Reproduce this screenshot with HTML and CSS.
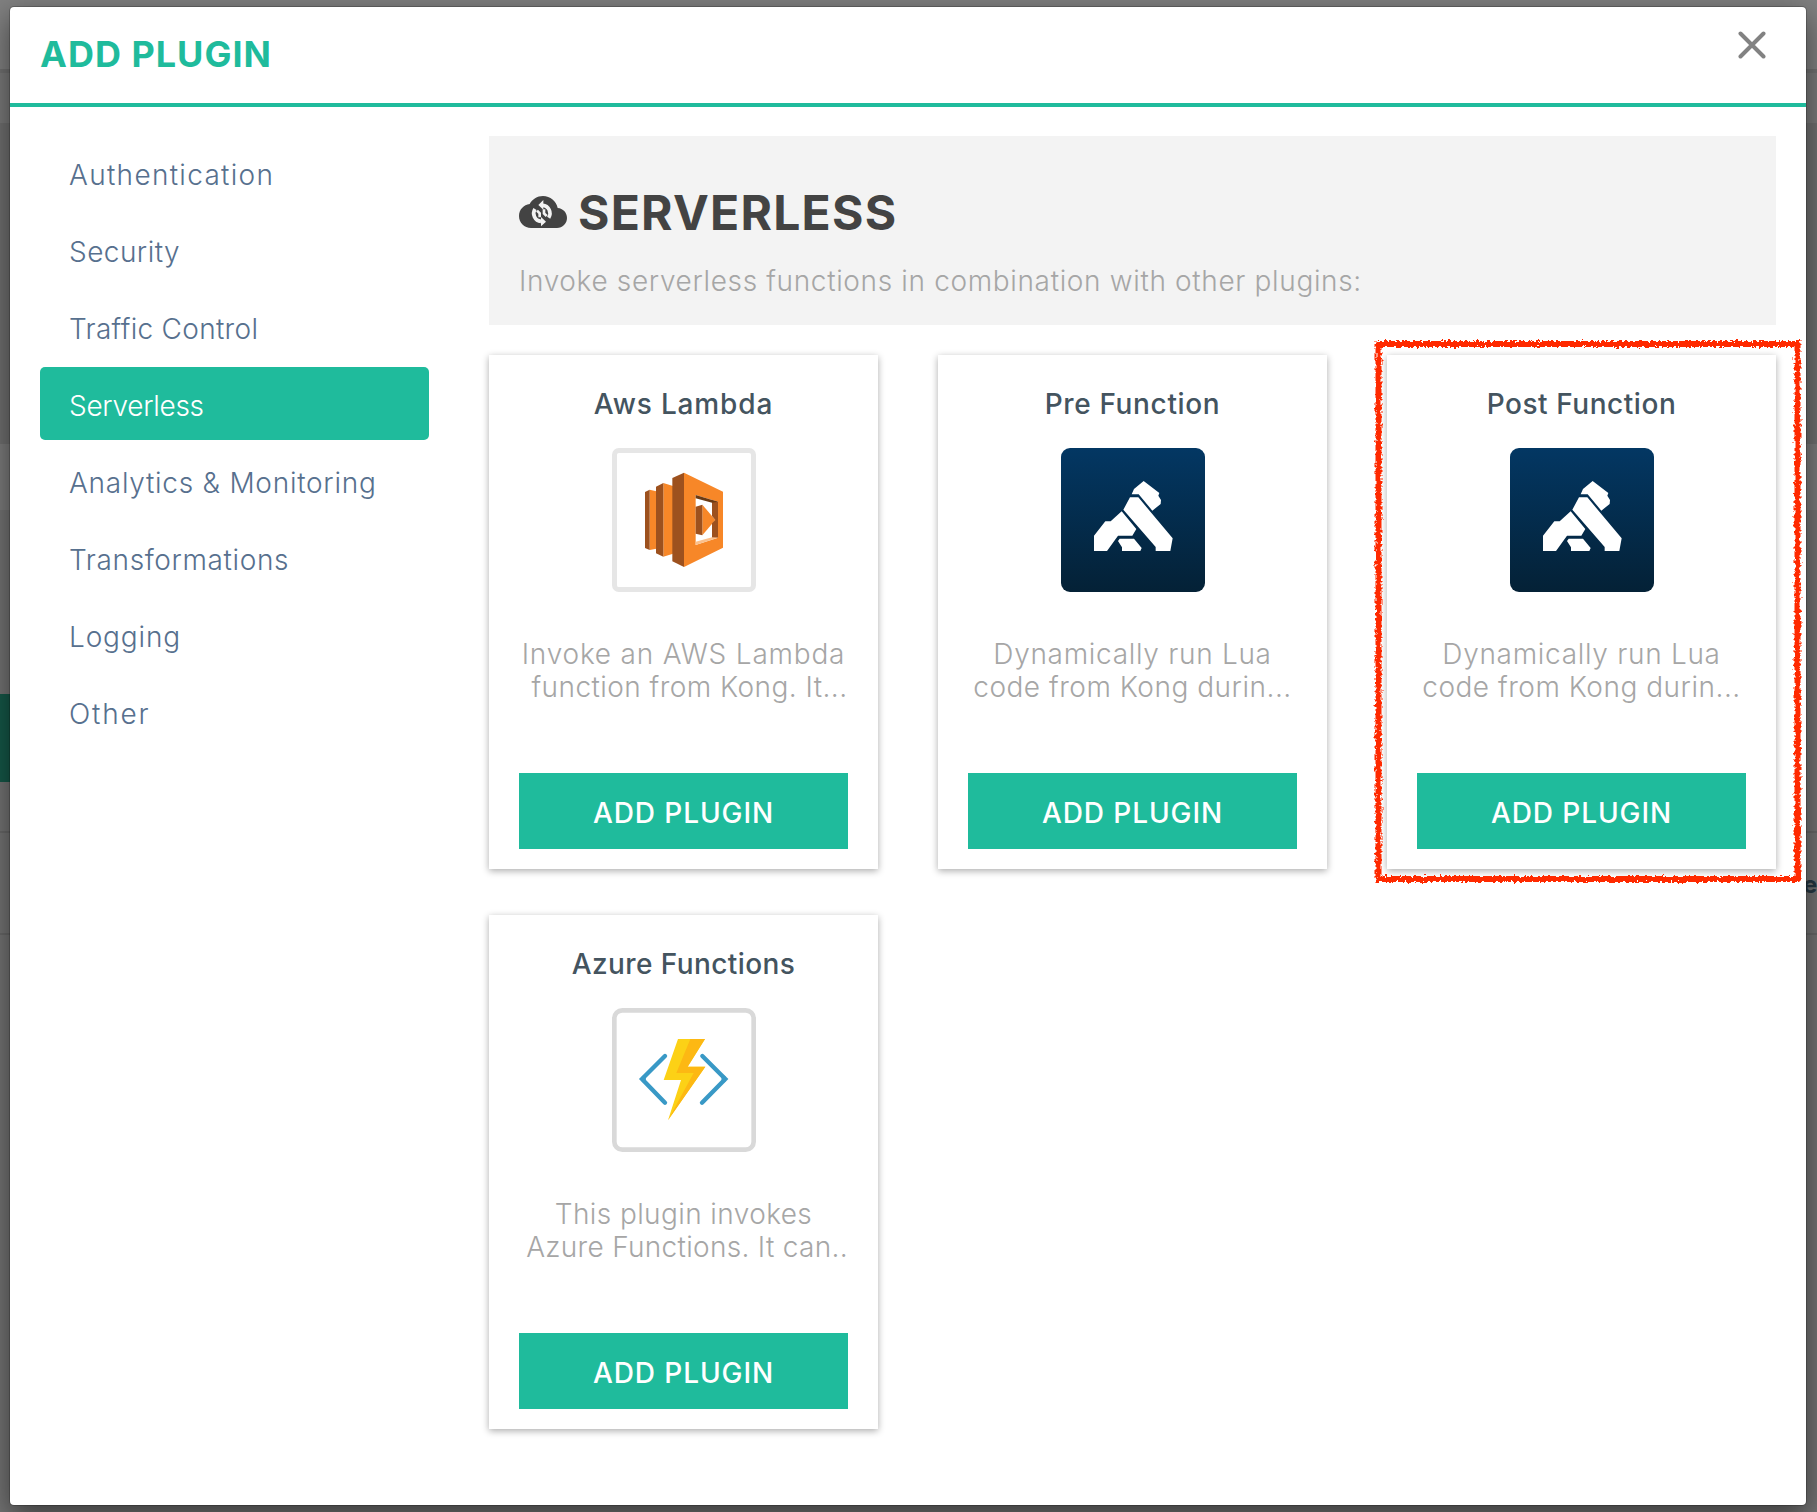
FILE: index.html
```html
<!DOCTYPE html>
<html lang="en">
<head>
<meta charset="utf-8">
<title>Add Plugin</title>
<link rel="stylesheet" href="styles.css">
</head>
<body>
<div class="page">
  <div class="band band--top"></div>
  <div class="band band--sub"></div>
  <div class="band band--a"></div>
  <div class="band band--b"></div>
  <div class="band band--c"></div>
  <div class="band band--d"></div>
  <div class="band band--active"><span class="page__tab"></span></div>
  <div class="band band--e"></div>
  <div class="band band--f"><span class="page__word">ea</span></div>
  <div class="band band--g"></div>
</div>

<svg class="defs" width="0" height="0">
  <defs>
    <linearGradient id="kong-bg" x1="0" y1="0" x2="0" y2="1">
      <stop offset="0" stop-color="#033763"/><stop offset="1" stop-color="#042136"/>
    </linearGradient>
    <symbol id="kong" viewBox="33 54 432 432">
      <rect x="33" y="54" width="432" height="432" rx="27" fill="url(#kong-bg)"/>
      <g fill="#fff">
        <path d="M281 153 328 189 325 197 333 210 332 222 307 242 266 193 245 193 252 177Z"/>
        <path d="M240 202H265L368 325 361 363H317V351L220 239Z"/>
        <path d="M215 244 259 297 247 317H204L171 363H132V317L166 274H182Z"/>
        <path d="M209 326H252L275 354 271 363H216V352L204 333Z"/>
      </g>
    </symbol>
  </defs>
</svg>

<section class="modal">
  <header class="modal__header">
    <h1 class="modal__title">ADD PLUGIN</h1>
    <svg class="modal__close" viewBox="0 0 28 28"><path d="M2.500 2.500 25.500 25.500M25.500 2.500 2.500 25.500"/></svg>
  </header>
  <div class="modal__body">
    <nav class="nav">
      <a class="nav__item nav__item--auth">Authentication</a>
      <a class="nav__item nav__item--security">Security</a>
      <a class="nav__item nav__item--traffic">Traffic Control</a>
      <a class="nav__item nav__item--serverless nav__item--active">Serverless</a>
      <a class="nav__item nav__item--analytics">Analytics &amp; Monitoring</a>
      <a class="nav__item nav__item--transform">Transformations</a>
      <a class="nav__item nav__item--logging">Logging</a>
      <a class="nav__item nav__item--other">Other</a>
    </nav>
    <main class="content">
      <div class="banner">
        <h2 class="banner__title">
          <svg class="banner__icon" viewBox="12 15 144 96">
            <path fill="#434343" transform="translate(12 -9) scale(6)" d="M19.35 10.04C18.67 6.59 15.64 4 12 4 9.11 4 6.6 5.64 5.35 8.04 2.34 8.36 0 10.91 0 14c0 3.31 2.69 6 6 6h13c2.76 0 5-2.24 5-5 0-2.64-2.05-4.78-4.65-4.96z"/>
            <g fill="none" stroke="#f3f3f3" stroke-width="11">
              <path d="M83 43A24 24 0 0 1 101 80"/>
              <path d="M78 91A24 24 0 0 1 60 54"/>
              <path stroke-width="8" d="M66 59 74 67V79M95 75 87 67V55"/>
            </g>
            <path fill="#f3f3f3" d="M85 27V56L70 42ZM78 78V106L93 92Z"/>
          </svg>
          <span>SERVERLESS</span>
        </h2>
        <p class="banner__text">Invoke serverless functions in combination with other plugins:</p>
      </div>
      <div class="grid">
        <article class="card">
          <h3 class="card__title card__title--aws">Aws Lambda</h3>
          <svg class="card__logo" viewBox="36 54 432 432">
            <rect x="43.500" y="61.500" width="417" height="417" rx="13" fill="#fff" stroke="#e6e6e6" stroke-width="15"/>
            <g fill="#f78728">
              <path d="M149 179 169 184V356L149 360Z"/><path d="M190 159 219 168V371L190 380Z"/>
              <path fill-rule="evenodd" d="M252 128 369 185V353L252 411ZM287 195V345L354 323V215Z"/>
              <path d="M307 224 346 270 307 316Z"/>
            </g>
            <g fill="#9d511e">
              <path d="M135 186 149 179V360L135 354Z"/><path d="M168 170 190 159V380L168 370Z"/>
              <path d="M217 144 252 128V411L217 394Z"/><path d="M287 230 307 224V316L287 311Z"/>
              <path d="M336 211 354 215V323L336 324V280L346 270 336 258Z"/>
            </g>
            <path fill="#6b3a13" d="M287 195 354 215 336 218 287 205Z"/>
            <path fill="#fbc08c" d="M287 335 336 322 354 323 287 345Z"/>
          </svg>
          <p class="card__text"><span class="line line--aws1">Invoke an AWS Lambda</span><span class="line line--aws2">function from Kong. It...</span></p>
          <button class="card__button">ADD PLUGIN</button>
        </article>
        <article class="card">
          <h3 class="card__title card__title--pre">Pre Function</h3>
          <svg class="card__logo"><use href="#kong"/></svg>
          <p class="card__text"><span class="line line--lua1">Dynamically run Lua</span><span class="line line--lua2">code from Kong durin...</span></p>
          <button class="card__button">ADD PLUGIN</button>
        </article>
        <article class="card">
          <h3 class="card__title card__title--post">Post Function</h3>
          <svg class="card__logo"><use href="#kong"/></svg>
          <p class="card__text"><span class="line line--lua1">Dynamically run Lua</span><span class="line line--lua2">code from Kong durin...</span></p>
          <button class="card__button">ADD PLUGIN</button>
          <svg class="marker" viewBox="0 0 440 556">
            <filter id="crayon" x="-5%" y="-5%" width="110%" height="110%">
              <feTurbulence type="fractalNoise" baseFrequency="0.35" numOctaves="2" seed="4" result="n"/>
              <feDisplacementMap in="SourceGraphic" in2="n" scale="6" xChannelSelector="R" yChannelSelector="G"/>
            </filter>
            <rect x="10.500" y="11" width="419" height="535" filter="url(#crayon)"/>
          </svg>
        </article>
        <article class="card">
          <h3 class="card__title card__title--azure">Azure Functions</h3>
          <svg class="card__logo" viewBox="36 54 432 432">
            <rect x="43" y="61" width="418" height="418" rx="24" fill="#fff" stroke="#d9d9d9" stroke-width="14"/>
            <g fill="none" stroke="#3999c6" stroke-width="13" stroke-linecap="round">
              <path d="M195 198 126 267 195 338M307 198 376 267 306 338"/>
              <path d="M131 263V271M371 263V271"/>
            </g>
            <path fill="#fcd116" d="M234 147H315L263 230H316L204 391 243 270H191Z"/>
            <path fill="#fdb813" d="M271 147H315L263 230H316L204 391 281 249H229Z"/>
          </svg>
          <p class="card__text"><span class="line line--az1">This plugin invokes</span><span class="line line--az2">Azure Functions. It can..</span></p>
          <button class="card__button">ADD PLUGIN</button>
        </article>
      </div>
    </main>
  </div>
</section>
</body>
</html>
```
FILE: styles.css
```css
* { box-sizing: border-box; margin: 0; padding: 0; }

body {
  width: 1817px;
  height: 1512px;
  overflow: hidden;
  position: relative;
  background: #6c6c6c;
  font-family: Inter, "Open Sans", sans-serif;
  font-weight: 330;
  font-size: 28px;
}

.defs { position: absolute; }

/* dimmed page behind the dialog */
.page { display: flex; flex-direction: column; height: 1512px; }
.band { flex: none; background: #747474; }
.band--top { height: 69px; background: #818181; }
.band--sub { height: 4px; background: #717171; }
.band--a { height: 50px; background: #7a7a7a; }
.band--b { height: 321px; background: #707070; }
.band--c { height: 66px; background: #7c7c7c; }
.band--d { height: 184px; }
.band--active { height: 88px; background: #747474; }
.page__tab { display: block; width: 40px; height: 100%; background: #155848; }
.band--e { height: 49px; }
.band--f { height: 104px; border-top: 2px solid #686868; border-bottom: 2px solid #686868; overflow: hidden; }
.page__word { display: block; padding-left: 1803px; line-height: 104px; font-size: 24px; font-weight: 700; letter-spacing: -1px; color: #263843; white-space: nowrap; }
.band--g { flex: 1; }

.modal {
  position: absolute;
  left: 9px;
  top: 6px;
  width: 1798px;
  height: 1500px;
  background: #fff;
  background-clip: padding-box;
  border: 1px solid rgba(0, 0, 0, .2);
  border-radius: 5px;
  box-shadow: 0 10px 30px rgba(0, 0, 0, .5);
}
.modal__header {
  display: flex;
  justify-content: space-between;
  height: 100px;
  padding: 25px 40px 0 30px;
  border-bottom: 4px solid #1fbb9c;
}
.modal__title { font-size: 36px; line-height: 44px; font-weight: 700; letter-spacing: 1px; color: #1fbb9c; }
.modal__close { width: 28px; height: 28px; margin-top: -1px; fill: none; stroke: #828282; stroke-width: 4; stroke-linecap: round; }
.modal__body { display: flex; gap: 60px; padding: 29px 30px 0; }

.nav { width: 389px; display: flex; flex-direction: column; gap: 4px; }
.nav__item { height: 73px; padding: 3px 30px 0 29px; line-height: 73px; border-radius: 5px; color: #57708e; white-space: nowrap; }
.nav__item--active { background: #1fbb9c; color: #fff; }
.nav__item--auth { letter-spacing: 1.3px; }
.nav__item--security { letter-spacing: .45px; }
.nav__item--traffic { letter-spacing: .3px; }
.nav__item--serverless { letter-spacing: -.3px; }
.nav__item--analytics { letter-spacing: .74px; }
.nav__item--transform { letter-spacing: .63px; }
.nav__item--logging { letter-spacing: .85px; }
.nav__item--other { letter-spacing: 1.8px; }

.content { width: 1287px; }
.banner { height: 189px; padding: 47px 30px 0; background: #f3f3f3; }
.banner__title { display: flex; align-items: center; gap: 11px; height: 60px; font-size: 48px; line-height: 60px; font-weight: 700; letter-spacing: 1.25px; color: #434343; }
.banner__icon { width: 48px; height: 32px; margin-bottom: 3px; }
.banner__text { margin-top: 18px; line-height: 40px; letter-spacing: .65px; color: #a6a6a6; }

.grid { display: grid; grid-template-columns: repeat(3, 389px); column-gap: 60px; row-gap: 46px; margin-top: 30px; }
.card {
  position: relative;
  display: flex;
  flex-direction: column;
  align-items: center;
  height: 514px;
  padding: 29px 30px 20px;
  background: #fff;
  box-shadow: 0 2px 7px rgba(0, 0, 0, .33);
}
.card__title { font-size: 28px; line-height: 40px; font-weight: 500; color: #44545f; white-space: nowrap; }
.card__title--aws { letter-spacing: .85px; }
.card__title--pre { letter-spacing: .65px; }
.card__title--post { letter-spacing: .55px; }
.card__title--azure { letter-spacing: .4px; }
.card__logo { width: 144px; height: 144px; margin-top: 24px; }
.card__text { width: 329px; margin-top: 46px; color: #a6a6a6; line-height: 33px; text-align: center; }
.line { display: block; white-space: nowrap; }
.line--aws1 { letter-spacing: .8px; }
.line--aws2 { padding-left: 12px; letter-spacing: .45px; }
.line--lua1 { letter-spacing: .7px; }
.line--lua2 { letter-spacing: .52px; }
.line--az1 { letter-spacing: .4px; }
.line--az2 { padding-left: 7px; letter-spacing: .3px; }
.card__button {
  width: 329px;
  height: 76px;
  margin-top: auto;
  padding-top: 3px;
  border: 0;
  background: #1fbb9c;
  color: #fff;
  font: 500 28px Inter, sans-serif;
  letter-spacing: .9px;
}

/* hand-drawn outline around the highlighted card */
.marker { position: absolute; left: -19px; top: -22px; width: 440px; height: 556px; fill: none; stroke: #ff2b00; stroke-width: 6; }
```
